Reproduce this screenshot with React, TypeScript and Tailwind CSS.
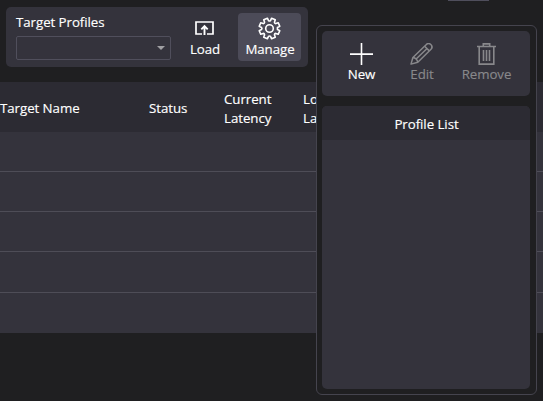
import React from "react";

const label = "whitespace-nowrap text-[13.3px] leading-[19px] tracking-[-0.06px] [-webkit-text-stroke:0.15px_currentColor]";

function LoadIcon() {
  return (
    <svg width="19" height="14" viewBox="0 0 19 14" fill="none" stroke="#fff" strokeWidth="1.7">
      <path d="M7 13H1V1h17v12h-6" />
      <path d="M9.5 14V5.2M6.3 8.4l3.2-3.2 3.2 3.2" strokeWidth="1.9" />
    </svg>
  );
}

function gearPath() {
  const pts: string[] = [];
  for (let i = 0; i < 8; i++) {
    const c = (i * Math.PI) / 4 + Math.PI / 8;
    [[-0.27, 8], [-0.19, 10.5], [0.19, 10.5], [0.27, 8]].forEach(([d, r], j) => {
      const p = `${(11.5 + r * Math.cos(c + d)).toFixed(2)} ${(11.5 + r * Math.sin(c + d)).toFixed(2)}`;
      pts.push(i === 0 && j === 0 ? `M${p}` : j === 0 ? `A1.5 1.5 0 0 0 ${p}` : `L${p}`);
    });
  }
  return pts.join("") + "Z";
}

function GearIcon() {
  return (
    <svg width="23" height="23" viewBox="0 0 23 23" fill="none" stroke="#fff" strokeWidth="1.6" strokeLinejoin="round">
      <path d={gearPath()} />
      <circle cx="11.5" cy="11.5" r="3.8" />
    </svg>
  );
}

function PlusIcon() {
  return (
    <svg width="23" height="22" viewBox="0 0 23 22" fill="none" stroke="#fff" strokeWidth="1.6">
      <path d="M11.5 0v22M0 11.1h23" />
    </svg>
  );
}

function PencilIcon() {
  return (
    <svg width="23" height="22" viewBox="0 0 23 22" fill="none" stroke="#88888b" strokeWidth="1.5" strokeLinejoin="round">
      <path d="M1 21.1l1.9-6.6L16.1 1.7a3.2 3.2 0 0 1 4.9 4.5L7.8 19.2z" />
      <path d="M2.9 14.5c2.5.4 4.3 2 4.9 4.7M14.6 3.3l4.7 4.6M5.6 16.5L16.8 5.7" />
    </svg>
  );
}

function TrashIcon() {
  return (
    <svg width="19" height="22" viewBox="0 0 19 22" fill="none" stroke="#88888b" strokeWidth="1.6">
      <path d="M0 3.5h19M6.3 3.5V.9h6.4v2.6M2.2 3.5v17.6h14.6V3.5M6.5 7v11M9.5 7v11M12.5 7v11" />
    </svg>
  );
}

export default function App() {
  return (
    <div className="relative h-[401px] w-[543px] overflow-hidden bg-[#1f1f21] font-['Open_Sans','Noto_Sans',sans-serif] text-white">
      <div className="absolute left-[448px] top-0 h-px w-[41px] bg-[#4f4e5c]" />
      <div className="ml-[6px] mt-[7px] flex h-[60px] w-[302px] rounded-[5px] bg-[#34333c]">
        <div className="ml-[10px] w-[155px] pt-[6px]">
          <div className={label}>Target Profiles</div>
          <div className="mt-[4px] flex h-[24px] items-center justify-end rounded-[2px] border border-[#504f5c] pr-[5px]">
            <svg width="8" height="4" viewBox="0 0 8 4" fill="#a0a0a3"><path d="M0 0h8L4 4z" /></svg>
          </div>
        </div>
        <div className="flex w-[67px] flex-col items-center pt-[14px]">
          <LoadIcon />
          <div className={label + " mt-[5px] pl-px"}>Load</div>
        </div>
        <div className="mt-[6px] flex h-[48px] w-[63px] flex-col items-center rounded-[4px] bg-[#4c4b58] pt-[4px]">
          <GearIcon />
          <div className={label + " pl-px"}>Manage</div>
        </div>
      </div>
      <div className="mt-[15px] flex h-[50px] items-center bg-[#2c2b33]">
        <div className={label + " w-[149px] pt-[3px]"}>Target Name</div>
        <div className={label + " w-[75px] pt-[3px]"}>Status</div>
        <div className={label + " w-[79px] pt-[3px]"}>Current<br />Latency</div>
        <div className={label + " pt-[3px]"}>Local<br />Latency</div>
      </div>
      <div className="flex flex-col bg-[#34333c]">
        <div className="h-[40px] border-b border-[#4e4d57]" />
        <div className="h-[40px] border-b border-[#4e4d57]" />
        <div className="h-[40px] border-b border-[#4e4d57]" />
        <div className="h-[41px] border-b border-[#4e4d57]" />
        <div className="h-[40px]" />
      </div>
      <div className="absolute left-[316px] top-[25px] flex h-[370px] w-[221px] flex-col rounded-[6px] border border-[#45444e] bg-[#1f1f21] p-[5px]">
        <div className="flex h-[65px] w-[208px] rounded-[5px] bg-[#34333c] pt-[12px]">
          <div className="flex w-[79px] flex-col items-center"><PlusIcon /><div className={label}>New</div></div>
          <div className="flex w-[41px] flex-col items-center text-[#88888b]"><PencilIcon /><div className={label + " pl-px"}>Edit</div></div>
          <div className="flex w-[88px] flex-col items-center text-[#88888b]"><TrashIcon /><div className={label + " pl-px"}>Remove</div></div>
        </div>
        <div className="mt-[10px] h-[283px] w-[208px] overflow-hidden rounded-[5px] bg-[#34333c]">
          <div className="flex h-[34px] items-center justify-center bg-[#2c2b33] pl-px pt-[2px]"><div className={label}>Profile List</div></div>
        </div>
      </div>
    </div>
  );
}
